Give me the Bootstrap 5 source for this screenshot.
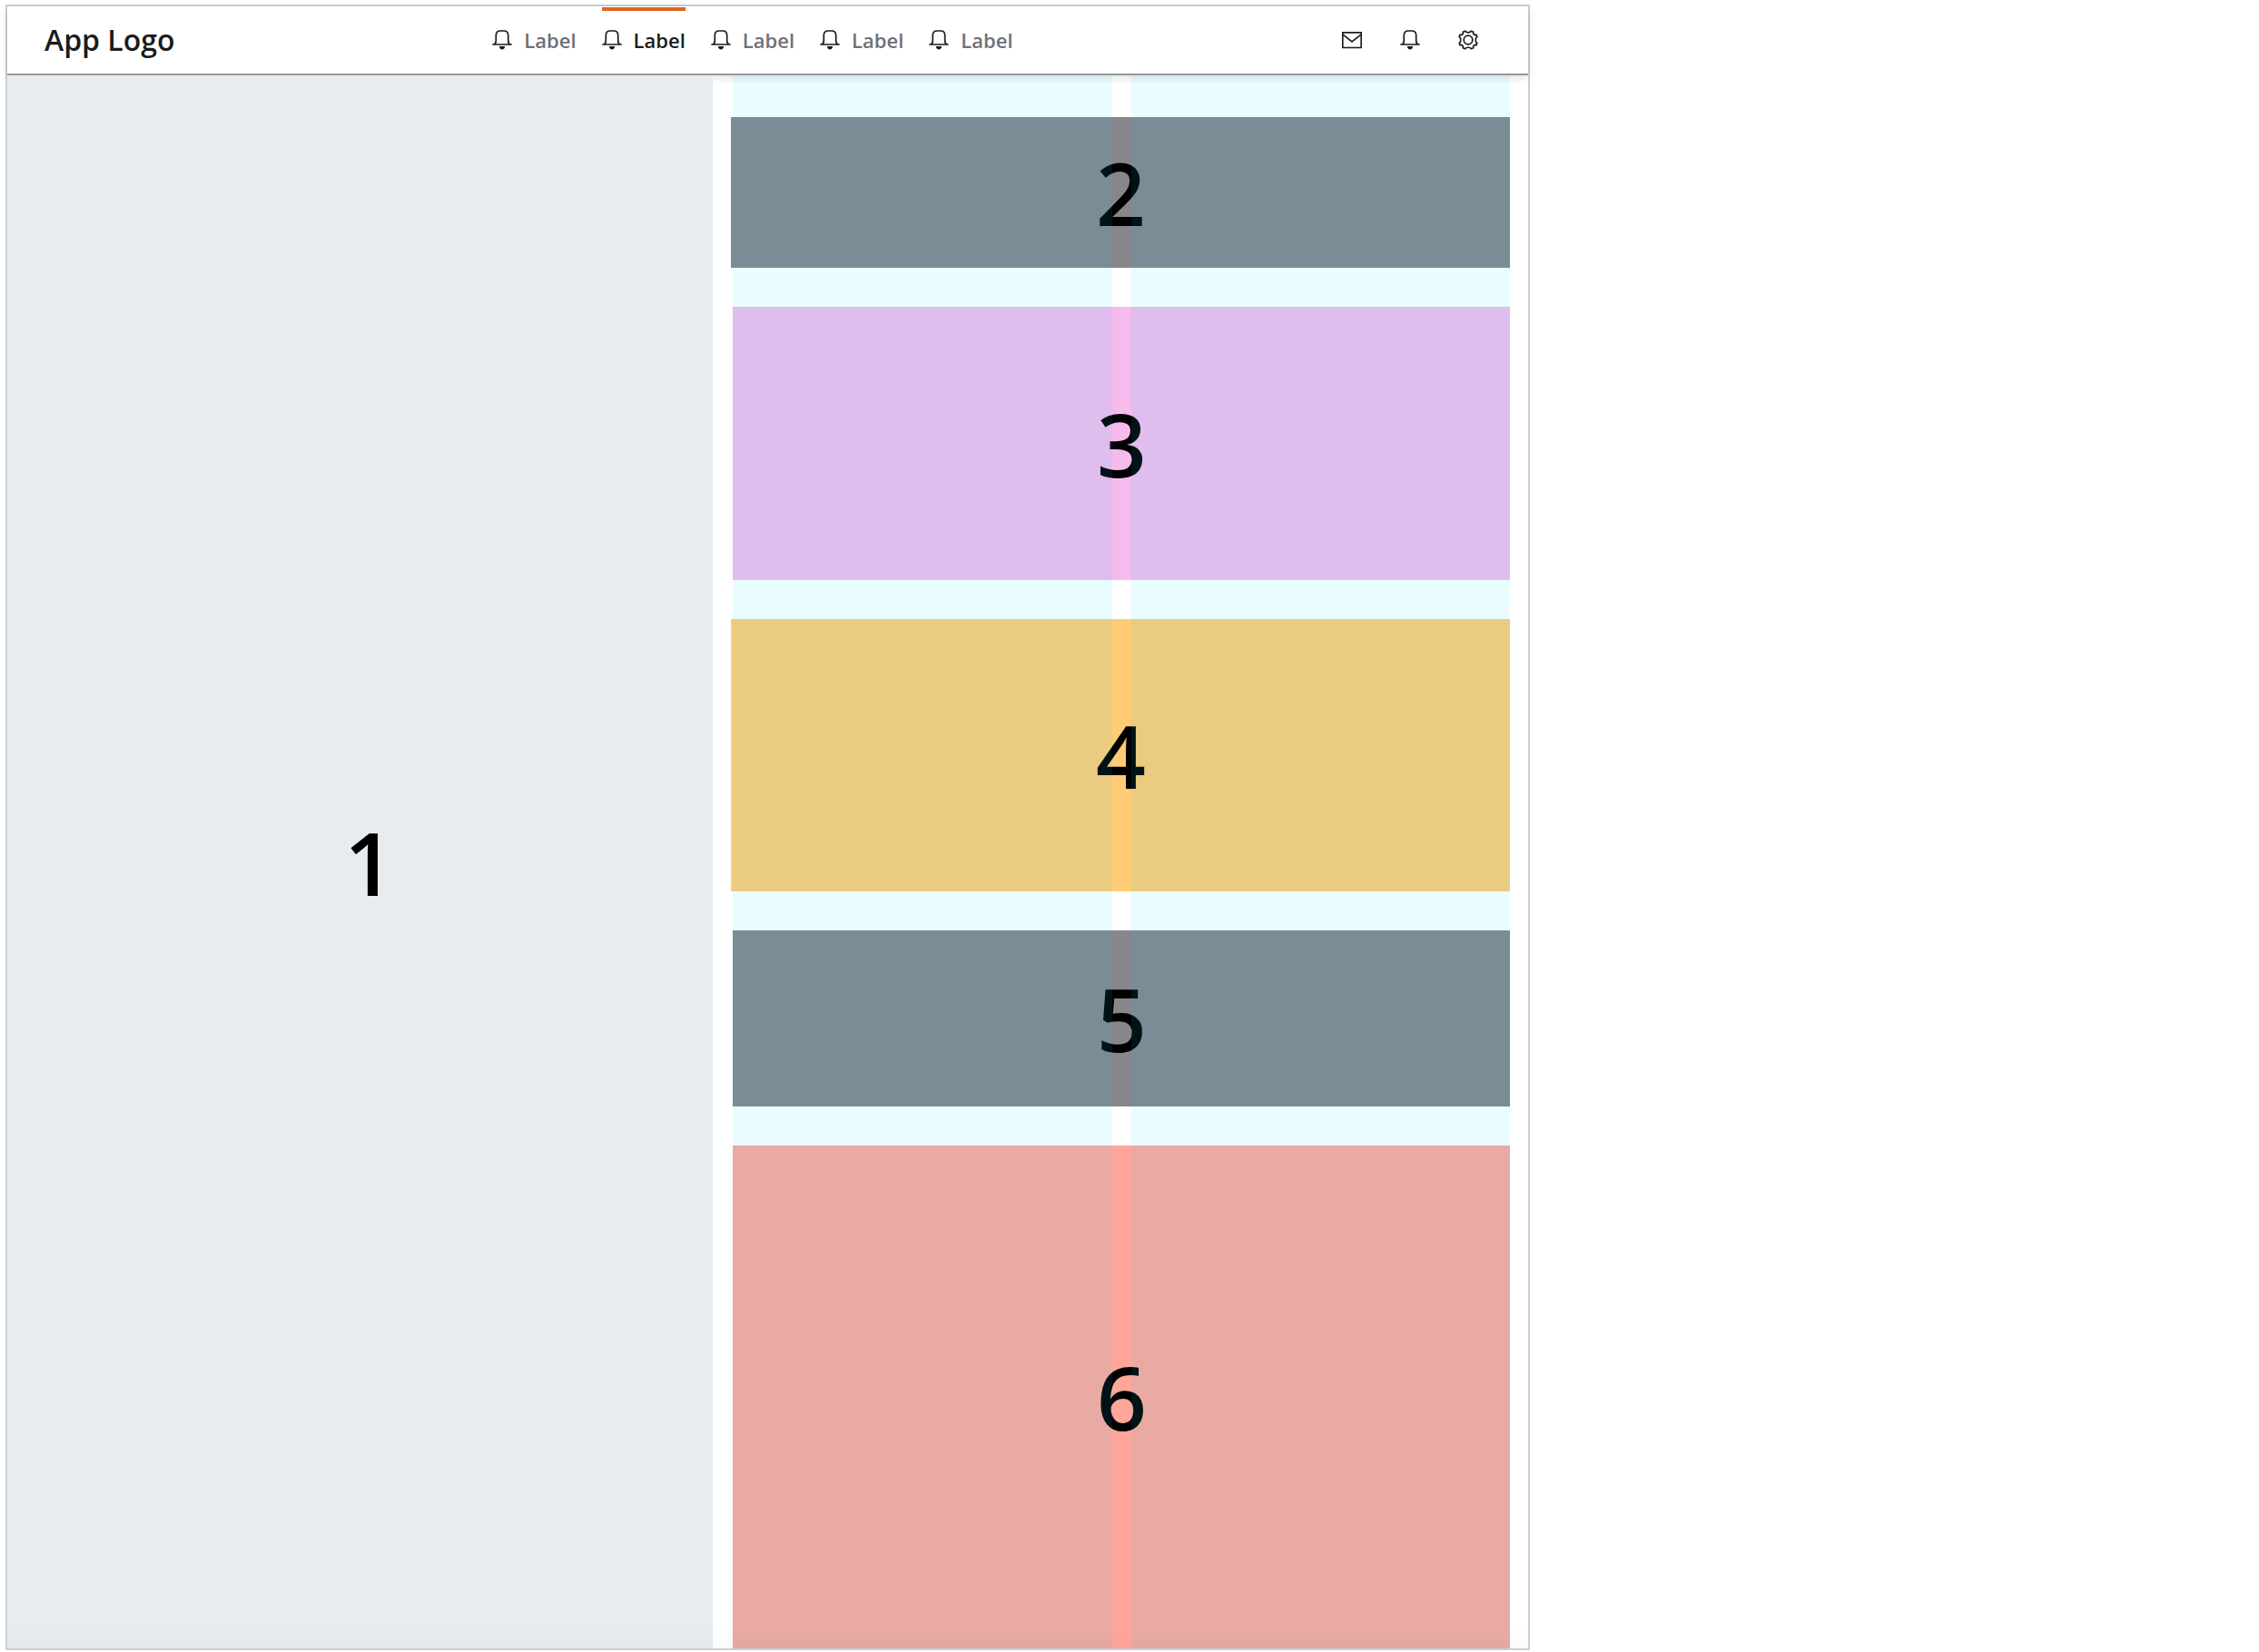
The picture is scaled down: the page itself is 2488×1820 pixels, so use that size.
<!DOCTYPE html>
<html lang="en">
<head>
<meta charset="utf-8">
<meta name="viewport" content="width=device-width, initial-scale=1">
<title>App layout</title>
<link href="https://cdn.jsdelivr.net/npm/bootstrap@5.3.0/dist/css/bootstrap.min.css" rel="stylesheet">
<style>
  body { background: #fff; font-family: "Open Sans", "Noto Sans", sans-serif; color: #1b1b1b; }
  .app-frame { width: 67.5%; min-height: calc(100vh - 7px); margin: 5px 0 2px 6px; border: 2px solid #cbd0d6; }
  .app-header { height: 76px; padding: 0 42px 0 41px; border-bottom: 2px solid #97989a; box-shadow: 0 3px 9px rgba(0,0,0,.12); z-index: 3; background: #fff; }
  .app-logo { font-size: 32px; font-weight: 600; line-height: 44px; color: #1b1b1b; }
  .app-tabs { gap: 28px; }
  .app-tab { gap: 13px; font-size: 22px; font-weight: 600; line-height: 30px; color: #6f7079; border-top: 4px solid transparent; padding-bottom: 6px; margin-top: 1px; }
  .app-tab.active { color: #1b1b1b; border-top-color: #e4651b; }
  .glyph { width: 22px; height: 22px; fill: none; stroke: #1b1b1b; stroke-width: 1.7; display: block; }
  .solid { fill: #1b1b1b; stroke: none; }
  .tool-btn { width: 48px; height: 48px; }
  .region { font-size: 96px; font-weight: 600; line-height: 130px; color: #000; }
  .side-panel { flex: 0 0 46.4%; padding-left: 20px; background: #e8ecef; z-index: 4; }
  .main-area { padding: 46px 20px 0 22px; }
  .stack-list { gap: 43px; }
  .region-short { min-height: 166px; background: #86868d; }
  .region-mid { min-height: 194px; background: #86868d; }
  .region-pink { min-height: 301px; background: #f5bbec; }
  .region-amber { min-height: 300px; background: #ffcb75; }
  .region-coral { min-height: 400px; background: #ffa69b; }
  .wide-left { margin-left: -2px; }
  .guides { position: absolute; inset: 0 20px 0 22px; gap: 21px; pointer-events: none; }
  .guides span { background: rgba(0,226,255,.085); }
  .foot-shade { position: absolute; inset: auto 0 0 0; height: 26px; background: linear-gradient(rgba(0,0,0,0), rgba(0,0,0,.02)); z-index: 5; pointer-events: none; }
</style>
</head>
<body>
<svg class="d-none" aria-hidden="true">
  <symbol id="bell" viewBox="0 0 22 22">
    <path d="M.3 16H21.700M2 15.800C3.900 15.300 4.300 13.800 4.300 11.500V6C4.300 2.600 6 1 9 1H13C16 1 17.700 2.600 17.700 6V11.500C17.700 13.800 18.100 15.300 20 15.800"/>
    <path class="solid" d="M8 18H14C14 20 12.800 21.500 11 21.500S8 20 8 18Z"/>
  </symbol>
</svg>
<div class="app-frame d-flex flex-column">
  <header class="app-header d-flex align-items-center justify-content-between position-relative">
    <a class="app-logo text-decoration-none" href="#">App Logo</a>
    <nav class="app-tabs d-flex h-100" aria-label="Main">
      <a class="app-tab d-flex align-items-center text-decoration-none" href="#"><svg class="glyph"><use href="#bell"/></svg>Label</a>
      <a class="app-tab active d-flex align-items-center text-decoration-none" href="#" aria-current="page"><svg class="glyph"><use href="#bell"/></svg>Label</a>
      <a class="app-tab d-flex align-items-center text-decoration-none" href="#"><svg class="glyph"><use href="#bell"/></svg>Label</a>
      <a class="app-tab d-flex align-items-center text-decoration-none" href="#"><svg class="glyph"><use href="#bell"/></svg>Label</a>
      <a class="app-tab d-flex align-items-center text-decoration-none" href="#"><svg class="glyph"><use href="#bell"/></svg>Label</a>
    </nav>
    <div class="d-flex gap-3">
      <button type="button" class="tool-btn btn p-0 border-0 d-flex align-items-center justify-content-center" aria-label="Messages">
        <svg class="glyph" viewBox="0 0 22 22"><path d="M.8 2.800H21.200V19.500H.8ZM.8 4.800L11 12.800L21.200 4.800"/></svg>
      </button>
      <button type="button" class="tool-btn btn p-0 border-0 d-flex align-items-center justify-content-center" aria-label="Notifications">
        <svg class="glyph"><use href="#bell"/></svg>
      </button>
      <button type="button" class="tool-btn btn p-0 border-0 d-flex align-items-center justify-content-center" aria-label="Settings">
        <svg class="glyph" viewBox="0 0 22 22"><circle cx="11" cy="11" r="4.800"/><path stroke-linejoin="round" d="M7.600 1.200C8.600 3.300 13.400 3.300 14.400 1.200L16.800 2.200C16 4.500 17.500 6 19.800 5.200L20.800 7.600C18.700 8.600 18.700 13.400 20.800 14.400L19.800 16.800C17.500 16 16 17.500 16.800 19.800L14.400 20.800C13.400 18.700 8.600 18.700 7.600 20.800L5.200 19.800C6 17.500 4.500 16 2.200 16.800L1.200 14.400C3.300 13.400 3.300 8.600 1.200 7.600L2.200 5.200C4.500 6 6 4.500 5.200 2.200Z"/></svg>
      </button>
    </div>
  </header>
  <main class="d-flex flex-grow-1 position-relative">
    <section class="region side-panel d-flex align-items-center justify-content-center">1</section>
    <div class="main-area d-flex flex-grow-1 position-relative">
      <div class="stack-list d-flex flex-column flex-grow-1">
        <section class="region region-short wide-left d-flex align-items-center justify-content-center">2</section>
        <section class="region region-pink d-flex align-items-center justify-content-center">3</section>
        <section class="region region-amber wide-left d-flex align-items-center justify-content-center">4</section>
        <section class="region region-mid d-flex align-items-center justify-content-center">5</section>
        <section class="region region-coral flex-grow-1 d-flex align-items-center justify-content-center">6</section>
      </div>
      <div class="guides d-flex" aria-hidden="true"><span class="flex-fill"></span><span class="flex-fill"></span></div>
    </div>
    <div class="foot-shade"></div>
  </main>
</div>
<script src="https://cdn.jsdelivr.net/npm/bootstrap@5.3.0/dist/js/bootstrap.bundle.min.js"></script>
</body>
</html>
